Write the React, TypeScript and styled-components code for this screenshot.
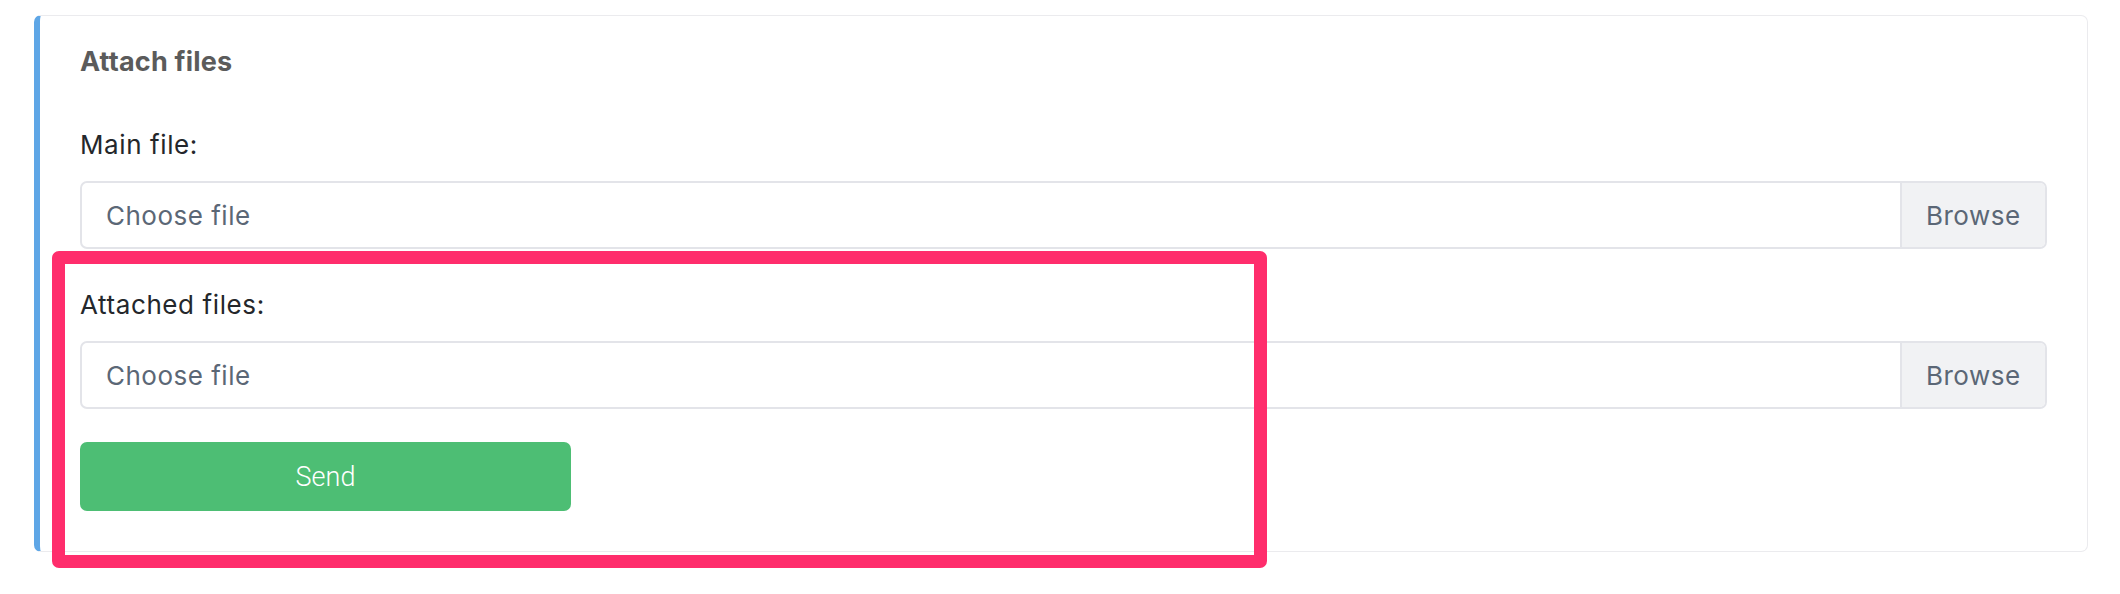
import React from "react";
import styled, { createGlobalStyle } from "styled-components";

const GlobalStyle = createGlobalStyle`
  html, body { margin: 0; padding: 0; background: #ffffff; }
  body { font-family: Inter, "Open Sans", "Liberation Sans", sans-serif; }
`;

const Page = styled.div`
  position: relative;
  padding: 15px 32px 0 34px;
  width: 2120px;
  min-height: 594px;
  box-sizing: border-box;
`;

const Card = styled.section`
  box-sizing: border-box;
  width: 2054px;
  border: 1px solid #ebebee;
  border-left: 6px solid #5ea6e6;
  border-radius: 7px;
  background: #fff;
  padding: 30px 40px 40px 40px;
  display: flex;
  flex-direction: column;
`;

const Title = styled.h5`
  margin: 0 0 47px 0;
  font-size: 27px;
  line-height: 32px;
  font-weight: 700;
  letter-spacing: 0.2px;
  color: #5b5b5b;
`;

const Group = styled.div<{ $gap?: number }>`
  display: flex;
  flex-direction: column;
  margin-bottom: ${(p) => p.$gap ?? 0}px;
`;

const Label = styled.label`
  font-size: 26px;
  line-height: 39px;
  letter-spacing: 0.6px;
  color: #24272b;
  margin-bottom: 17px;
`;

const FileField = styled.div`
  display: flex;
  height: 68px;
  box-sizing: border-box;
  border: 2px solid #e3e4e9;
  border-radius: 7px;
  overflow: hidden;
  font-size: 26px;
  letter-spacing: 0.5px;
  color: #5b6776;
`;

const Placeholder = styled.span`
  flex: 1;
  display: flex;
  align-items: center;
  padding-left: 24px;
`;

const Browse = styled.span`
  display: flex;
  align-items: center;
  padding: 0 24px;
  width: 145px;
  box-sizing: border-box;
  background: #f1f2f4;
  border-left: 2px solid #e3e4e9;
`;

const SendButton = styled.button`
  width: 491px;
  height: 69px;
  border: none;
  border-radius: 7px;
  background: #4dbe74;
  color: #ffffff;
  font-family: Roboto, Inter, "Liberation Sans", sans-serif;
  font-size: 27px;
  font-weight: 300;
  cursor: pointer;
`;

const Highlight = styled.div`
  position: absolute;
  left: 52px;
  top: 251px;
  width: 1215px;
  height: 317px;
  box-sizing: border-box;
  border: 13px solid #ff2d6c;
  border-radius: 7px;
  pointer-events: none;
`;

function FileInput() {
  return (
    <FileField>
      <Placeholder>Choose file</Placeholder>
      <Browse>Browse</Browse>
    </FileField>
  );
}

export default function App() {
  return (
    <>
      <GlobalStyle />
      <Page>
        <Card>
          <Title>Attach files</Title>
          <Group $gap={36}>
            <Label>Main file:</Label>
            <FileInput />
          </Group>
          <Group $gap={33}>
            <Label>Attached files:</Label>
            <FileInput />
          </Group>
          <div>
            <SendButton>Send</SendButton>
          </div>
        </Card>
        <Highlight />
      </Page>
    </>
  );
}
